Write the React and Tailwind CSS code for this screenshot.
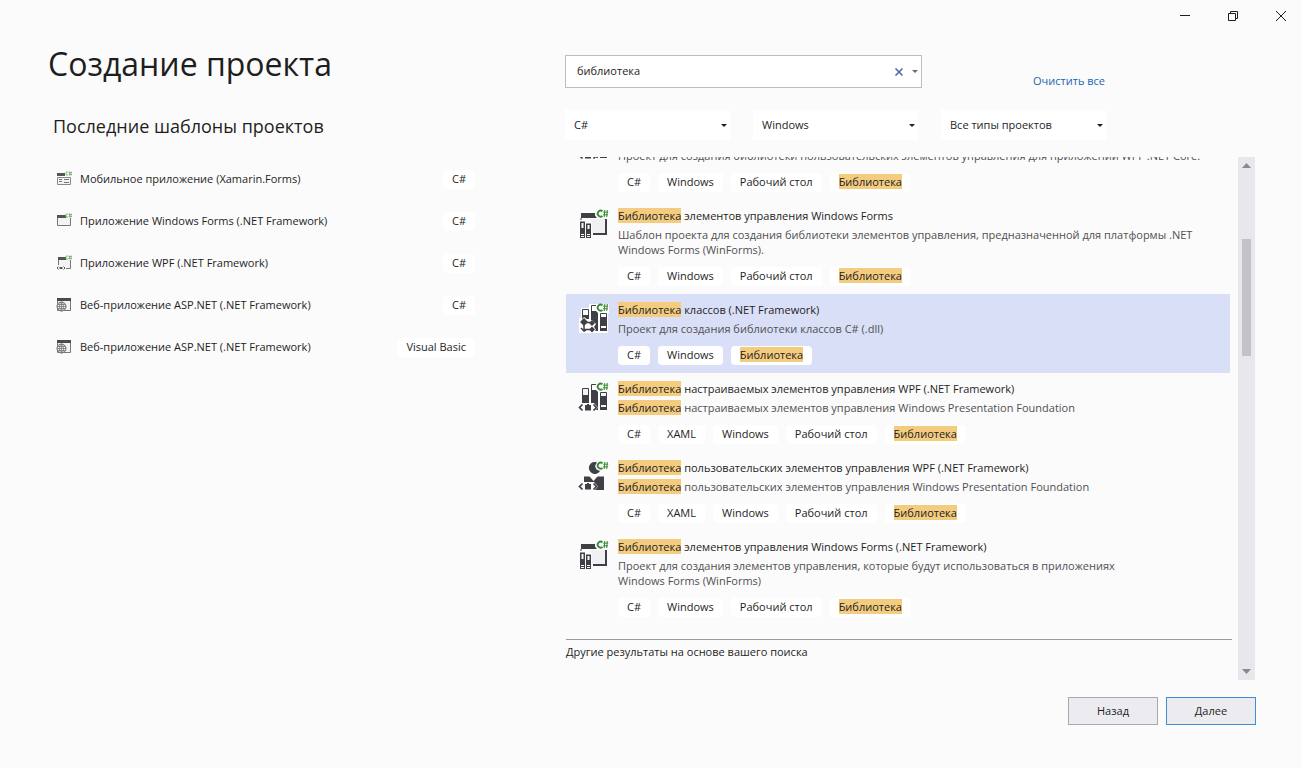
import { useLayoutEffect, useRef } from 'react';

const DARK = '#3f3f46';

function CSharpMark() {
  return (
    <>
      <path d="M24.500 3.200A3 3 0 1 0 24.500 8" fill="none" stroke="#388a34" strokeWidth="1.800" />
      <path d="M26.800 2l-.6 7M29.300 2l-.6 7M25.200 4.200h5M25 6.800h5" fill="none" stroke="#388a34" />
    </>
  );
}

function Markup() {
  return (
    <g>
      <path d="M0 26.500L4 22h12l4 4.500-4 4.500H4z" fill="#fbfbfb" />
      <path d="M4.500 23.500l-3 3 3 3M15.500 23.500l3 3-3 3" fill="none" stroke={DARK} strokeWidth="1.700" />
      <path d="M7 24h2v-1h2v1h2v5.500H7z" fill={DARK} />
    </g>
  );
}

function Books() {
  return (
    <g>
      <path d="M4.500 7.500h6v15h-6z" fill="#f4f4f6" stroke={DARK} />
      <rect x="4" y="14" width="7" height="9" fill={DARK} />
      <path d="M13.500 9.500v-6H18" fill="none" stroke={DARK} />
      <path d="M13 9h5l2 2v18h-7z" fill={DARK} />
      <path d="M22.500 11.500h6v17h-6z" fill="#f4f4f6" stroke={DARK} />
      <path d="M22 15h7v9h-7zM22 26h7v3h-7z" fill={DARK} />
    </g>
  );
}

function FormsLibraryIcon() {
  return (
    <>
      <rect x="13" y="11" width="14" height="14" fill="#f0eff1" />
      <path d="M3 5h14v2.500l2 2.500H3z" fill={DARK} />
      <path d="M28 11v15H15" fill="none" stroke={DARK} strokeWidth="2" />
      <path d="M3 10v2" stroke={DARK} />
      <path d="M1 12h7v2h6v17H1z" fill="#fbfbfb" />
      <path d="M2 13.500h5V30H2zM8 15.500h5V30H8z" fill={DARK} />
      <path d="M3.500 15h2v5h-2zM9.500 17h2v4h-2zM3 26h3v1H3zM9 26h3v1H9zM3 28h3v1H3zM9 28h3v1H9z" fill="#fbfbfb" />
      <CSharpMark />
    </>
  );
}

function ClassLibraryIcon() {
  return (
    <>
      <path d="M3 6h8V2h20v9h-1v20H1V16h2z" fill="#fff" />
      <path d="M4.500 7.500h6v8h-6z" fill="#fff" stroke={DARK} />
      <path d="M4 13h7v4H4z" fill={DARK} />
      <path d="M13.500 9.500v-6H18" fill="none" stroke={DARK} />
      <path d="M13 9h5l2 2v18h-7z" fill={DARK} />
      <path d="M22.500 11.500h6v17h-6z" fill="#fff" stroke={DARK} />
      <path d="M22 15h7v9h-7zM22 26h7v3h-7z" fill={DARK} />
      <path d="M1 20l5-5 4 3h4l4 4-2 3 2 3-4 3-9-1-4-4z" fill="#fff" />
      <path d="M6 16l4 4-4 4-4-4zM14 18l3 3-3 3-3-3zM14 24.500l3 3-3 3-3-3z" fill={DARK} />
      <path d="M8 20.500h4M6 23v4.500h6" fill="none" stroke={DARK} strokeWidth="1.500" />
      <path d="M3 26l3 3 2-1" fill="none" stroke={DARK} strokeWidth="1.500" />
      <CSharpMark />
    </>
  );
}

function ControlLibraryIcon() {
  return (
    <>
      <Books />
      <Markup />
      <CSharpMark />
    </>
  );
}

function UserControlIcon() {
  return (
    <>
      <path d="M19 2.300a6 6 0 1 0 3 8.700L18.500 9.500 17 6z" fill={DARK} />
      <path d="M6 16.500h5.500l4 4.500 4-4.500H26V30H6z" fill={DARK} />
      <Markup />
      <CSharpMark />
    </>
  );
}

const icons = {
  forms: FormsLibraryIcon,
  classes: ClassLibraryIcon,
  controls: ControlLibraryIcon,
  user: UserControlIcon,
};

function SmallIcon({ kind }) {
  return (
    <svg viewBox="0 0 16 16" className="size-4 shrink-0" aria-hidden="true">
      {kind === 'mobile' && (
        <>
          <path d="M1 2h8v3H1z" fill="#555" />
          <path d="M1.500 6.500h13v7h-13z" fill="#f3f3f5" stroke="#8a8a8e" />
          <path d="M3 8.500h3M3 10.500h3M8 8.500h5M8 11.500h5" stroke="#77777b" />
        </>
      )}
      {kind === 'forms' && (
        <>
          <path d="M1.500 3.500h13v9h-13z" fill="#f3f3f5" stroke="#77777b" />
          <path d="M1 2h9v3H1z" fill="#555" />
        </>
      )}
      {kind === 'wpf' && (
        <>
          <path d="M2.500 10V3.500h12v10H9" fill="#f3f3f5" stroke="#77777b" />
          <path d="M2 2h8v3H2z" fill="#555" />
          <path d="M0 11h10v5H0z" fill="#fbfbfb" />
          <path d="M2.500 11.500L1 13l1.500 1.500M7.500 11.500L9 13l-1.500 1.500" fill="none" stroke="#555" />
          <path d="M3.500 12h3v2h-3z" fill="#555" />
        </>
      )}
      {kind === 'web' && (
        <>
          <path d="M1.500 2.500h13v11h-13z" fill="#f3f3f5" stroke="#77777b" />
          <path d="M1 1h14v3H1z" fill="#4b4b4f" />
          <circle cx="5.500" cy="9.500" r="4.500" fill="#f3f3f5" stroke="#66666a" />
          <path d="M1 9.500h9M5.500 5v9M2 7.500h7M2 11.500h7" fill="none" stroke="#77777b" strokeWidth=".8" />
          <ellipse cx="5.500" cy="9.500" rx="2" ry="4.500" fill="none" stroke="#77777b" strokeWidth=".8" />
        </>
      )}
      {kind !== 'web' && (
        <>
          <path d="M9 0h7v5h-5z" fill="#fbfbfb" />
          <path d="M12 1h-2v3h2M13.500 .5v4M15 .5v4M12.500 1.500H16M12.500 3.500H16" fill="none" stroke="#6fae6c" strokeWidth=".8" />
        </>
      )}
    </svg>
  );
}

function Caret({ className }) {
  return (
    <svg viewBox="0 0 6 3" className={className} fill="currentColor" aria-hidden="true">
      <path d="M0 0h6L3 3z" />
    </svg>
  );
}

function Highlight({ text }) {
  return text.split(/(Библиотека)/).map((part, i) =>
    part === 'Библиотека' ? (
      <mark key={i} className="bg-[#f4cc80] text-[#1e1e1e]">
        {part}
      </mark>
    ) : (
      part
    )
  );
}

function Tag({ children }) {
  return (
    <span className="flex h-[19px] items-center rounded bg-white px-[9px] whitespace-nowrap text-[#1e1e1e]">
      <span>
        <Highlight text={children} />
      </span>
    </span>
  );
}

const recent = [
  { icon: 'mobile', name: 'Мобильное приложение (Xamarin.Forms)', lang: 'C#' },
  { icon: 'forms', name: 'Приложение Windows Forms (.NET Framework)', lang: 'C#' },
  { icon: 'wpf', name: 'Приложение WPF (.NET Framework)', lang: 'C#' },
  { icon: 'web', name: 'Веб-приложение ASP.NET (.NET Framework)', lang: 'C#' },
  { icon: 'web', name: 'Веб-приложение ASP.NET (.NET Framework)', lang: 'Visual Basic' },
];

const results = [
  {
    icon: 'controls',
    name: 'Библиотека пользовательских элементов управления WPF',
    text: 'Проект для создания библиотеки пользовательских элементов управления для приложений WPF .NET Core.',
    tags: ['C#', 'Windows', 'Рабочий стол', 'Библиотека'],
  },
  {
    icon: 'forms',
    name: 'Библиотека элементов управления Windows Forms',
    text: 'Шаблон проекта для создания библиотеки элементов управления, предназначенной для платформы .NET\nWindows Forms (WinForms).',
    tags: ['C#', 'Windows', 'Рабочий стол', 'Библиотека'],
  },
  {
    icon: 'classes',
    name: 'Библиотека классов (.NET Framework)',
    text: 'Проект для создания библиотеки классов C# (.dll)',
    tags: ['C#', 'Windows', 'Библиотека'],
    selected: true,
  },
  {
    icon: 'controls',
    name: 'Библиотека настраиваемых элементов управления WPF (.NET Framework)',
    text: 'Библиотека настраиваемых элементов управления Windows Presentation Foundation',
    tags: ['C#', 'XAML', 'Windows', 'Рабочий стол', 'Библиотека'],
  },
  {
    icon: 'user',
    name: 'Библиотека пользовательских элементов управления WPF (.NET Framework)',
    text: 'Библиотека пользовательских элементов управления Windows Presentation Foundation',
    tags: ['C#', 'XAML', 'Windows', 'Рабочий стол', 'Библиотека'],
  },
  {
    icon: 'forms',
    name: 'Библиотека элементов управления Windows Forms (.NET Framework)',
    text: 'Проект для создания элементов управления, которые будут использоваться в приложениях\nWindows Forms (WinForms)',
    tags: ['C#', 'Windows', 'Рабочий стол', 'Библиотека'],
  },
];

function Result({ item }) {
  const Icon = icons[item.icon];
  return (
    <li
      role="option"
      aria-selected={Boolean(item.selected)}
      className={`flex gap-2 px-3 py-2 ${item.selected ? 'bg-[#dadff8]' : ''}`}
    >
      <svg viewBox="0 0 32 32" className="size-8 shrink-0" aria-hidden="true">
        <Icon />
      </svg>
      <div className="min-w-0 flex-1">
        <h3 className="leading-4">
          <Highlight text={item.name} />
        </h3>
        <p className="mt-[3px] leading-[15px] whitespace-pre-line text-[#505054]">
          <Highlight text={item.text} />
        </p>
        <div className="mt-[10px] flex gap-2">
          {item.tags.map((tag) => (
            <Tag key={tag}>{tag}</Tag>
          ))}
        </div>
      </div>
    </li>
  );
}

function Filter({ label, value }) {
  return (
    <div className="relative w-[165px]">
      <select aria-label={label} className="h-[30px] w-full appearance-none bg-white pr-6 pl-[9px] outline-none">
        <option>{value}</option>
      </select>
      <Caret className="pointer-events-none absolute top-[14px] right-[3px] h-[3px] w-[6px]" />
    </div>
  );
}

export default function App() {
  const list = useRef(null);

  useLayoutEffect(() => {
    list.current.scrollTop = 36;
  }, []);

  return (
    <div className="flex h-screen flex-col bg-[#fbfbfb] font-['Open_Sans','Noto_Sans',sans-serif] text-[11px] text-[#1e1e1e]">
      <header className="flex h-8 shrink-0 justify-end gap-[6px]">
        <button aria-label="Свернуть" className="flex w-[42px] items-center justify-center">
          <svg viewBox="0 0 10 10" className="size-[10px]">
            <path d="M0 4.500h10" stroke="#1e1e1e" />
          </svg>
        </button>
        <button aria-label="Восстановить" className="flex w-[42px] items-center justify-center">
          <svg viewBox="0 0 10 10" className="size-[10px]" fill="none" stroke="#1e1e1e">
            <path d="M.5 2.500h7v7h-7zM2.500 2.500v-2h7v7h-2" />
          </svg>
        </button>
        <button aria-label="Закрыть" className="flex w-[42px] items-center justify-center">
          <svg viewBox="0 0 10 10" className="size-[10px]">
            <path d="M0 0l10 10M10 0L0 10" stroke="#1e1e1e" />
          </svg>
        </button>
      </header>

      <div className="flex min-h-0 flex-1">
        <section className="w-[565px] shrink-0 pr-[90px] pl-12">
          <h1 className="mt-2 text-[32px] leading-[48px]">Создание проекта</h1>
          <h2 className="mt-[26px] ml-[5px] text-lg leading-6">Последние шаблоны проектов</h2>
          <ul className="mt-5 pl-2">
            {recent.map((item, i) => (
              <li key={i} className="flex h-[42px] items-center gap-2">
                <SmallIcon kind={item.icon} />
                <span className="flex-1">{item.name}</span>
                <Tag>{item.lang}</Tag>
              </li>
            ))}
          </ul>
        </section>

        <main className="flex min-w-0 flex-1 flex-col pt-[23px] pr-[46px] pb-[43px]">
          <div className="flex w-[540px] shrink-0 justify-between">
            <div className="flex h-[33px] w-[357px] items-center border border-[#b9bcc9] bg-white">
              <input
                aria-label="Поиск шаблонов"
                defaultValue="библиотека"
                className="min-w-0 flex-1 bg-transparent pl-[11px] outline-none"
              />
              <button aria-label="Очистить" className="flex size-5 items-center justify-center">
                <svg viewBox="0 0 8 8" className="size-2">
                  <path d="M.5 .5l7 7M7.500 .5l-7 7" stroke="#4a64a8" strokeWidth="1.500" />
                </svg>
              </button>
              <button aria-label="Журнал поиска" className="flex h-full w-3 items-center justify-center text-[#6b6b70]">
                <Caret className="h-[3px] w-[6px]" />
              </button>
            </div>
            <a href="#clear" className="self-end leading-[14px] text-[#1765b5]">
              Очистить все
            </a>
          </div>

          <div className="mt-[22px] flex shrink-0 gap-[23px]">
            <Filter label="Язык" value="C#" />
            <Filter label="Платформа" value="Windows" />
            <Filter label="Тип проекта" value="Все типы проектов" />
          </div>

          <div className="mt-[17px] mr-px flex min-h-0 flex-1">
            <div ref={list} className="min-w-0 flex-1 overflow-y-auto pr-[6px] pl-px [scrollbar-width:none]">
              <ul role="listbox" aria-label="Шаблоны" className="mr-[2px]">
                {results.map((item) => (
                  <Result key={item.name} item={item} />
                ))}
              </ul>
              <p className="mt-[14px] border-t border-[#9a9a9e] pt-1 pb-6 leading-4">
                Другие результаты на основе вашего поиска
              </p>
            </div>
            <div className="flex w-[17px] shrink-0 flex-col items-center bg-[#e8e8ec] py-[6px] text-[#868999]">
              <svg viewBox="0 0 9 5" className="h-[5px] w-[9px]" fill="currentColor">
                <path d="M0 5h9L4.500 0z" />
              </svg>
              <div className="mt-[71px] h-[117px] w-[9px] bg-[#c2c3c9]" />
              <svg viewBox="0 0 9 5" className="mt-auto h-[5px] w-[9px]" fill="currentColor">
                <path d="M0 0h9L4.500 5z" />
              </svg>
            </div>
          </div>

          <div className="mt-[17px] flex shrink-0 justify-end gap-2">
            <button className="h-7 w-[90px] border border-[#a9a9ad] bg-[#ececf0]">Назад</button>
            <button className="h-7 w-[90px] border border-[#3c8fd4] bg-[#ececf0]">Далее</button>
          </div>
        </main>
      </div>
    </div>
  );
}
